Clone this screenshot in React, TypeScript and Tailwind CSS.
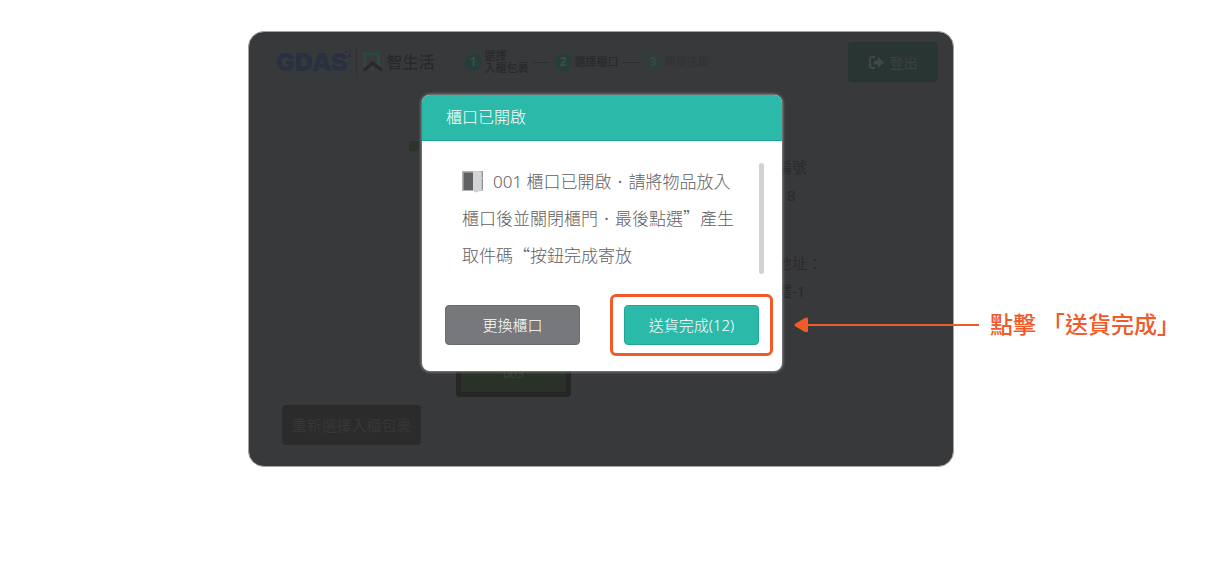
import { Fragment } from 'react'
import clsx from 'clsx'

type Step = { no: number; lines: string[]; pending?: boolean }

const STEPS: Step[] = [
  { no: 1, lines: ['選擇', '入櫃包裹'] },
  { no: 2, lines: ['選擇櫃口'] },
  { no: 3, lines: ['開櫃送貨'], pending: true },
]

function Logo() {
  return (
    <div className="flex items-center">
      <div className="relative font-['Inter',sans-serif] text-[25px] leading-8 font-black text-[#293042]">
        GDAS
        <svg className="absolute top-1 -right-1" width="8" height="8" viewBox="0 0 8 8" fill="#293042">
          <rect x="1" y="1" width="2" height="2" />
          <rect x="5" y="0" width="2" height="2" />
          <rect x="4" y="4" width="3" height="3" />
        </svg>
      </div>
      <span className="ml-2 h-8 w-px bg-[#303133]" />
      <svg className="ml-1.5" width="20" height="20" viewBox="0 0 20 20" fill="none">
        <path d="M1.500 15V2h14v13" stroke="#284a45" strokeWidth="3" />
        <path d="M1 18.500 9.500 11l9.500 7.500" stroke="#28282a" strokeWidth="3" />
        <path d="m9.500 15.500 2 2-2 2-2-2z" fill="#284a45" />
      </svg>
      <span className="ml-1 text-[16px] font-medium text-[#28292a]">智生活</span>
    </div>
  )
}

function Steps() {
  return (
    <ol className="flex items-center text-[11px] leading-3 font-medium">
      {STEPS.map((s, i) => (
        <Fragment key={s.no}>
          {i > 0 && <li aria-hidden className="mr-1.5 ml-1 h-px w-4 bg-[#2c2d2e]" />}
          <li className={clsx('flex items-center gap-[3px]', s.pending ? 'text-[#303334]' : 'text-[#28292a]')}>
            <span
              className={clsx(
                'flex size-[17px] items-center justify-center rounded-full text-[12px] font-bold',
                s.pending ? 'bg-[#2f3e3c] text-[#38494a]' : 'bg-[#243e3b] text-[#47494a]',
              )}
            >
              {s.no}
            </span>
            <span>
              {s.lines.map((l) => (
                <span key={l} className="block">{l}</span>
              ))}
            </span>
          </li>
        </Fragment>
      ))}
    </ol>
  )
}

function DoorIcon() {
  return (
    <svg className="mr-[9px]" width="22" height="23" viewBox="0 0 22 23">
      <rect x="0.500" y="1.500" width="20" height="19" fill="#c4c5c7" stroke="#b0b1b3" />
      <rect x="1.500" y="2.500" width="10" height="17.500" fill="#606164" />
      <path d="M11 2 13 0.500l6 1.500v19l-6 1.500-2-1.500z" fill="#d3d4d6" />
      <path d="M20.500 2v5M20.500 9v10" stroke="#8d8e91" />
    </svg>
  )
}

// 全形標點使用中文字體
function Mark({ children }: { children: string }) {
  return <span className="font-['Noto_Sans_CJK_TC',sans-serif] leading-none">{children}</span>
}

function Dot() {
  return <span className="inline-block w-[17px] text-center font-normal">·</span>
}

function Dialog() {
  const btn = 'h-10 w-full rounded text-[15px] font-light text-white'
  return (
    <div
      role="dialog"
      aria-labelledby="dialog-title"
      className="w-[360px] overflow-hidden rounded-lg bg-white shadow-[0_0_3px_1px_#8b8b8b]"
    >
      <h2
        id="dialog-title"
        className="h-[46px] border-b border-[#1fa595] bg-[#2bb9a9] px-6 text-[16px] leading-[45px] font-light text-white"
      >
        櫃口已開啟
      </h2>
      <div className="mt-[22px] mr-[18px] ml-10 flex justify-between">
        <div className="text-[17px] leading-[37px] font-light whitespace-nowrap text-[#5f6063]">
          <p className="flex h-[37px] items-center">
            <DoorIcon />
            <span>001 櫃口已開啟<Dot />請將物品放入</span>
          </p>
          <p className="h-[37px]">
            櫃口後並關閉櫃門<Dot />最後點選<Mark>”</Mark>產生
          </p>
          <p className="h-[37px]">
            取件碼<Mark>“</Mark>按鈕完成寄放
          </p>
        </div>
        <span className="w-[5px] rounded-full bg-[#d2d2d3]" />
      </div>
      <div className="mt-[31px] mb-[26px] flex justify-between px-[23px]">
        <div className="w-[135px]">
          <button type="button" className={clsx(btn, 'border border-[#6a6b6e] bg-[#77787b]')}>
            更換櫃口
          </button>
        </div>
        <div className="relative w-[135px]">
          <button type="button" className={clsx(btn, 'border border-[#22a797] bg-[#2bb9a9]')}>
            送貨完成(12)
          </button>
          <span className="pointer-events-none absolute -inset-x-[14px] -inset-y-[11px] rounded-md border-[3px] border-[#f15a29]" />
        </div>
      </div>
    </div>
  )
}

function Device() {
  return (
    <section className="relative overflow-hidden rounded-2xl border border-[#a3a4a2] bg-[#38393b]">
      <header className="mt-2.5 flex items-center pr-[15px] pl-[27px]">
        <Logo />
        <div className="ml-[30px]">
          <Steps />
        </div>
        <button
          type="button"
          className="ml-auto flex h-10 w-[90px] items-center justify-center gap-1.5 rounded bg-[#293533] text-[14px] text-[#3c4143]"
        >
          <svg width="15" height="13" viewBox="0 0 15 13">
            <path d="M6 1H3a2 2 0 0 0-2 2v7a2 2 0 0 0 2 2h3" fill="none" stroke="#414648" strokeWidth="2" />
            <path d="M5 4.500h4V1l6 5.500L9 12V8.500H5z" fill="#414648" />
          </svg>
          登出
        </button>
      </header>

      <main className="flex pt-[59px] pl-40">
        <span className="size-2.5 bg-[#2c3529]" />
        <div className="mt-[210px] ml-[37px] flex h-[46px] w-[115px] items-center justify-center rounded-sm border-[5px] border-[#262626] bg-[#2a3128] text-[12px] text-[#3b423b]">
          003
        </div>
        <dl className="mt-3 ml-[206px] text-[15px] leading-7 text-[#2a2b2c]">
          <dt>編號</dt>
          <dd className="pl-2.5">8</dd>
          <dt className="mt-10">地址：</dt>
          <dd>樓-1</dd>
        </dl>
      </main>

      <footer className="mt-2 mb-[21px] pl-[33px]">
        <button type="button" className="h-10 w-[139px] rounded bg-[#2b2b2b] text-[15px] text-[#363739]">
          重新選擇入櫃包裹
        </button>
      </footer>

      {/* 彈窗遮罩 */}
      <div className="absolute inset-0 flex items-start justify-center pt-[63px] pl-0.5">
        <Dialog />
      </div>
    </section>
  )
}

export default function App() {
  return (
    <div className="grid min-h-screen grid-cols-[248px_minmax(0,706px)_1fr] items-start bg-white pt-[31px] font-['Noto_Sans','Noto_Sans_CJK_TC',sans-serif]" lang="zh-TW">
      <div className="col-start-2">
        <Device />
      </div>
      <aside className="relative mt-[277px] pl-9">
        <svg className="absolute top-2 -left-40" width="185" height="16" viewBox="0 0 185 16">
          <path d="M12 9h173" stroke="#f15a29" strokeWidth="2" />
          <path d="M1.500 7.500 11 2q3-1.500 3 1.500v11q0 3-3 1.500L1.500 10.500q-2-1.500 0-3z" fill="#f15a29" />
        </svg>
        <p className="text-[23px] leading-8 font-medium whitespace-nowrap text-[#f15a29]">點擊 「送貨完成」</p>
      </aside>
    </div>
  )
}
